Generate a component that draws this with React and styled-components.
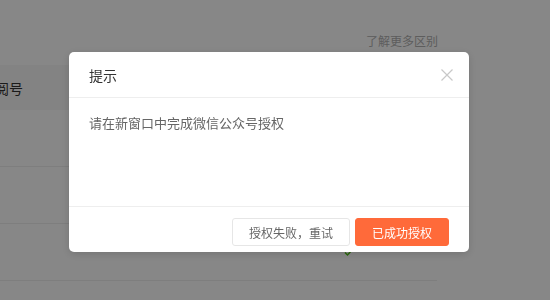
import styled, { createGlobalStyle } from "styled-components";

const GlobalStyle = createGlobalStyle`
    html, body {
        margin: 0;
        padding: 0;
        background: #fff;
        font-family: "Noto Sans CJK SC", "Noto Sans", sans-serif;
    }
`;

const Page = styled.div`
    width: 550px;
    height: 300px;
    overflow: hidden;
    padding-top: 33px;
    box-sizing: border-box;
`;

const LinkRow = styled.div`
    display: flex;
    justify-content: flex-end;
    padding-right: 112px;
    height: 32px;
`;

const MoreLink = styled.span`
    font-size: 12px;
    line-height: 15px;
    color: #b0b0b0;
`;

const Table = styled.div`
    width: 437px;
`;

const HeadRow = styled.div`
    height: 45px;
    background: #f8f8f8;
    display: flex;
    align-items: center;
    font-size: 14px;
    color: #333;
    overflow: hidden;
`;

const HeadLabel = styled.span`
    margin-left: -19px;
`;

const Row = styled.div`
    height: 56px;
    border-bottom: 1px solid #eee;
    display: flex;
    align-items: center;
    padding-left: 344px;
`;

const Check = styled.svg`
    width: 9px;
    height: 9px;
`;

const Overlay = styled.div`
    position: fixed;
    inset: 0;
    background: rgba(0, 0, 0, 0.47);
    padding: 52px 0 0 69px;
`;

const Modal = styled.div`
    width: 400px;
    background: #fff;
    border-radius: 5px;
    box-shadow: 0 2px 8px rgba(0, 0, 0, 0.15);
    overflow: hidden;
`;

const Header = styled.div`
    height: 45px;
    border-bottom: 1px solid #eee;
    display: flex;
    align-items: center;
    justify-content: space-between;
    padding: 0 16px 0 20px;
`;

const Title = styled.div`
    font-size: 14px;
    color: #333;
`;

const Close = styled.svg`
    width: 12px;
    height: 12px;
`;

const Body = styled.div`
    height: 108px;
    box-sizing: border-box;
    padding: 15px 20px;
    font-size: 13px;
    line-height: 20px;
    color: #666;
`;

const Footer = styled.div`
    border-top: 1px solid #eee;
    display: flex;
    justify-content: flex-end;
    gap: 5px;
    padding: 11px 20px 6px;
`;

const Button = styled.button`
    height: 28px;
    padding: 0 16px;
    border-radius: 3px;
    font-family: inherit;
    font-size: 12px;
    border: 1px solid ${p => (p.$primary ? "#ff6a3a" : "#e6e6e6")};
    background: ${p => (p.$primary ? "#ff6a3a" : "#fff")};
    color: ${p => (p.$primary ? "#fff" : "#666")};
`;

const App = () => {
    return (
        <>
            <GlobalStyle />
            <Page>
                <LinkRow>
                    <MoreLink>了解更多区别</MoreLink>
                </LinkRow>
                <Table>
                    <HeadRow>
                        <HeadLabel>订阅号</HeadLabel>
                    </HeadRow>
                    <Row />
                    <Row />
                    <Row>
                        <Check viewBox="0 0 9 9">
                            <path d="M1 4.5 L3.5 7 L8 2" fill="none" stroke="#52c41a" strokeWidth="1.5" />
                        </Check>
                    </Row>
                </Table>
            </Page>
            <Overlay>
                <Modal>
                    <Header>
                        <Title>提示</Title>
                        <Close viewBox="0 0 12 12">
                            <path d="M0.5 0.5 L11.5 11.5 M11.5 0.5 L0.5 11.5" stroke="#c8c8c8" strokeWidth="1.2" />
                        </Close>
                    </Header>
                    <Body>请在新窗口中完成微信公众号授权</Body>
                    <Footer>
                        <Button>授权失败，重试</Button>
                        <Button $primary>已成功授权</Button>
                    </Footer>
                </Modal>
            </Overlay>
        </>
    );
};

export default App;
